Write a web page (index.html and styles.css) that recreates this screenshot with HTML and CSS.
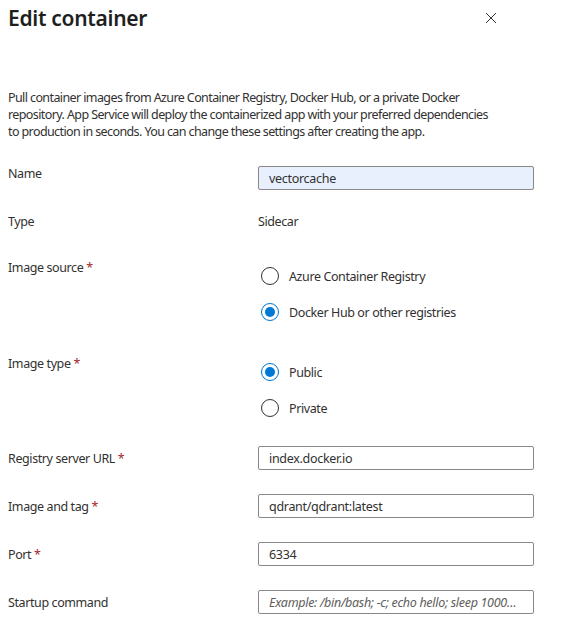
FILE: index.html
```html
<!DOCTYPE html>
<html>
<head>
<meta charset="utf-8">
<link rel="stylesheet" href="styles.css">
</head>
<body>
<div class="panel">
  <header class="head">
    <h1 class="title">Edit container</h1>
    <button class="close" aria-label="Close">
      <svg width="12" height="12" viewBox="0 0 12 12"><path d="M1 1 L11 11 M11 1 L1 11" stroke="#323130" stroke-width="1" fill="none"/></svg>
    </button>
  </header>
  <p class="intro">Pull container images from Azure Container Registry, Docker Hub, or a private Docker repository. App Service will deploy the containerized app with your preferred dependencies to production in seconds. You can change these settings after creating the app.</p>

  <div class="row row-name">
    <div class="label">Name</div>
    <input class="field autofill" type="text" value="vectorcache">
  </div>

  <div class="row row-type">
    <div class="label">Type</div>
    <div class="value">Sidecar</div>
  </div>

  <div class="row row-source">
    <div class="label">Image source <span class="req">*</span></div>
    <div class="radios">
      <label class="radio"><span class="dot"></span>Azure Container Registry</label>
      <label class="radio checked"><span class="dot"></span>Docker Hub or other registries</label>
    </div>
  </div>

  <div class="row row-imgtype">
    <div class="label">Image type <span class="req">*</span></div>
    <div class="radios">
      <label class="radio checked"><span class="dot"></span>Public</label>
      <label class="radio"><span class="dot"></span>Private</label>
    </div>
  </div>

  <div class="row row-input first-input">
    <div class="label">Registry server URL <span class="req">*</span></div>
    <input class="field" type="text" value="index.docker.io">
  </div>

  <div class="row row-input">
    <div class="label">Image and tag <span class="req">*</span></div>
    <input class="field" type="text" value="qdrant/qdrant:latest">
  </div>

  <div class="row row-input">
    <div class="label">Port <span class="req">*</span></div>
    <input class="field" type="text" value="6334">
  </div>

  <div class="row row-input">
    <div class="label">Startup command</div>
    <input class="field" type="text" placeholder="Example: /bin/bash; -c; echo hello; sleep 1000000">
  </div>
</div>
</body>
</html>
```

FILE: styles.css
```css
* { box-sizing: border-box; }
html, body { margin: 0; padding: 0; background: #fff; }
body {
  font-family: "Noto Sans", "Open Sans", sans-serif;
  font-size: 12.5px;
  color: #323130;
}
.panel { padding: 0 8px; width: 571px; }
.head {
  display: flex;
  justify-content: space-between;
  align-items: flex-start;
  height: 40px;
}
.title {
  margin: 0;
  padding-top: 2px;
  font-size: 21px;
  font-weight: 600;
  line-height: 32px;
  color: #201f1e;
  letter-spacing: -0.3px;
}
.close {
  border: 0;
  background: none;
  padding: 0;
  margin: 12px 66px 0 0;
  width: 12px;
  height: 12px;
  display: flex;
}
.intro {
  margin: 49px 0 0;
  width: 490px;
  line-height: 17px;
  letter-spacing: -0.6px;
}
.row {
  display: grid;
  grid-template-columns: 250px 276px;
}
.label, .value, .radio { line-height: 17px; letter-spacing: -0.4px; }
.req { color: #a4262c; }
.row-name { margin-top: 25px; align-items: start; }
.row-name .field { margin-top: 1px; }
.row-type { margin-top: 23px; }
.row-source { margin-top: 29px; }
.row-imgtype { margin-top: 33px; }
.row-input { margin-top: 24px; align-items: center; }
.row-input.first-input { margin-top: 28px; }
.radios {
  display: flex;
  flex-direction: column;
  gap: 16px;
  padding-top: 7px;
}
.radio {
  display: flex;
  align-items: center;
  height: 20px;
  gap: 10px;
  padding-left: 3px;
}
.dot {
  width: 18px;
  height: 18px;
  border-radius: 50%;
  border: 1px solid #323130;
  background: #fff;
  flex: none;
  position: relative;
}
.radio.checked .dot { border-color: #0078d4; }
.radio.checked .dot::after {
  content: "";
  position: absolute;
  left: 3px; top: 3px;
  width: 10px; height: 10px;
  border-radius: 50%;
  background: #0078d4;
}
.field {
  height: 24px;
  width: 276px;
  border: 1px solid #8a8886;
  border-radius: 2px;
  padding: 0 10px;
  font-family: inherit;
  font-size: 12.5px;
  color: #323130;
  background: #fff;
  letter-spacing: -0.3px;
  outline: none;
  text-overflow: ellipsis;
}
.field.autofill { background: #e8f0fe; }
.field::placeholder { color: #605e5c; font-style: italic; }
```
